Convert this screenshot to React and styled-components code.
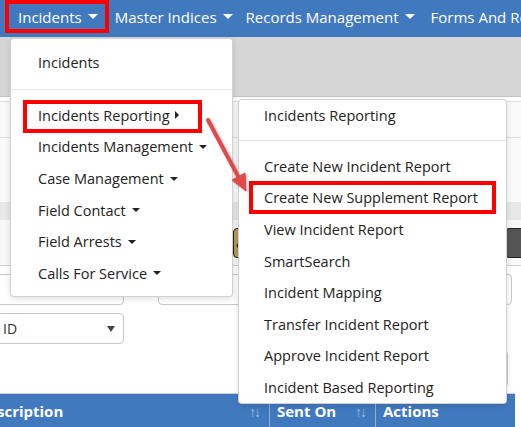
import React from 'react';
import styled, { createGlobalStyle } from 'styled-components';

const GlobalStyle = createGlobalStyle`
  html, body {
    margin: 0;
    padding: 0;
    background: #fff;
  }
  body {
    font-family: 'Open Sans', 'Noto Sans', sans-serif;
  }
`;

const Page = styled.div`
  position: relative;
  width: 521px;
  height: 427px;
  overflow: hidden;
  background: #fff;
`;

const NavBar = styled.div`
  display: flex;
  height: 37px;
  padding-left: 5px;
  background: #4179bf;
  color: #fff;
  font-size: 15px;
  white-space: nowrap;
`;

const NavItem = styled.div`
  display: flex;
  align-items: center;
  box-sizing: border-box;
  height: 33px;
  padding: ${p => p.$pad || '0 9px'};
  border: ${p => (p.$highlight ? '4px solid #ff0000' : '0')};
`;

const Caret = styled.span`
  display: inline-block;
  width: 0;
  height: 0;
  margin-left: ${p => p.$gap || 6}px;
  border-top: ${p => p.$size || 4}px solid currentColor;
  border-left: ${p => p.$size || 4}px solid transparent;
  border-right: ${p => p.$size || 4}px solid transparent;
`;

const CaretRight = styled.span`
  display: inline-block;
  width: 0;
  height: 0;
  margin-left: 5px;
  border-left: 4px solid currentColor;
  border-top: 4px solid transparent;
  border-bottom: 4px solid transparent;
`;

const GrayStrip = styled.div`
  height: 59px;
  background: #d6d6d6;
  border-bottom: 1px solid #c4c4c4;
`;

const Panel = styled.div`
  margin-top: 4px;
  border-top: 1px solid #dedede;
  background: #fafafa;
`;

const PanelHead = styled.div`
  height: 35px;
  border-bottom: 1px solid #dedede;
`;

const PanelBody = styled.div`
  height: 64px;
`;

const Band = styled.div`
  height: 18px;
  background: #e8e8e8;
`;

const ButtonRow = styled.div`
  display: flex;
  align-items: center;
  justify-content: space-between;
  height: 45px;
  padding-left: 233px;
  background: #f8f8f8;
  border-bottom: 1px solid #cfcfcf;
`;

const Button = styled.div`
  display: flex;
  align-items: center;
  box-sizing: border-box;
  width: ${p => p.$w}px;
  height: 30px;
  padding: 0 12px;
  margin-right: ${p => p.$right || 0}px;
  border-radius: 4px;
  border: 1px solid #222;
  background: ${p => p.$bg};
  color: #222;
  font-size: 14px;
  text-indent: ${p => p.$indent || 0}px;
`;

const FieldRow = styled.div`
  display: flex;
  align-items: flex-start;
  gap: 34px;
  margin-top: ${p => p.$top}px;
`;

const Field = styled.div`
  display: flex;
  align-items: center;
  justify-content: space-between;
  box-sizing: border-box;
  width: ${p => p.$w}px;
  height: ${p => p.$h}px;
  margin-left: ${p => p.$ml || 0}px;
  margin-top: ${p => p.$mt || 0}px;
  padding: 0 8px 0 ${p => p.$pl || 8}px;
  border: 1px solid #c8c8c8;
  border-radius: 4px;
  background: #fff;
  color: #333;
  font-size: 14px;
`;

const SelectCaret = styled.span`
  width: 0;
  height: 0;
  border-top: 6px solid #444;
  border-left: 4px solid transparent;
  border-right: 4px solid transparent;
`;

const TableHead = styled.div`
  position: absolute;
  left: -30px;
  top: 393px;
  display: flex;
  width: 545px;
  height: 34px;
  border-top: 1px solid #d0d0d0;
  background: #4179bf;
  color: #fff;
  font-size: 15px;
  font-weight: 700;
`;

const HeadCell = styled.div`
  display: flex;
  align-items: center;
  justify-content: space-between;
  box-sizing: border-box;
  width: ${p => p.$w}px;
  padding: 0 10px 0 7px;
  border-right: ${p => (p.$last ? '0' : '1px solid #8fb0dc')};
`;

const SortIcon = styled.span`
  color: #a3bde0;
  font-size: 14px;
  font-weight: 400;
  letter-spacing: -2px;
`;

const Menu = styled.div`
  position: absolute;
  left: ${p => p.$x}px;
  top: ${p => p.$y}px;
  box-sizing: border-box;
  width: ${p => p.$w}px;
  height: ${p => p.$h}px;
  padding-top: ${p => p.$pt}px;
  background: #fff;
  border: 1px solid rgba(0, 0, 0, 0.18);
  border-radius: 4px;
  box-shadow: 0 2px 6px rgba(0, 0, 0, 0.12);
  color: #222;
  font-size: 14.5px;
  white-space: nowrap;
`;

const MenuItem = styled.div`
  position: relative;
  display: flex;
  align-items: center;
  box-sizing: border-box;
  height: 31.6px;
  padding-left: ${p => p.$pl}px;
  padding-bottom: 2px;

  ${p =>
    p.$box &&
    `
    &::after {
      content: '';
      position: absolute;
      left: ${p.$box[0]}px;
      top: ${p.$box[1]}px;
      width: ${p.$box[2]}px;
      height: ${p.$box[3]}px;
      box-sizing: border-box;
      border: 4px solid #ff0000;
    }
  `}
`;

const Divider = styled.div`
  margin: ${p => p.$m};
  border-top: 1px solid #e6e6e6;
`;

const Arrow = styled.svg`
  position: absolute;
  left: 0;
  top: 0;
  pointer-events: none;
`;

const mainItems = [
  'Incidents Management',
  'Case Management',
  'Field Contact',
  'Field Arrests',
  'Calls For Service',
];

const subItems = [
  'Create New Incident Report',
  'Create New Supplement Report',
  'View Incident Report',
  'SmartSearch',
  'Incident Mapping',
  'Transfer Incident Report',
  'Approve Incident Report',
  'Incident Based Reporting',
];

export default function App() {
  return (
    <Page>
      <GlobalStyle />
      <NavBar>
        <NavItem $highlight $pad="0 7px 0 9px">
          Incidents<Caret $size={5} />
        </NavItem>
        <NavItem $pad="0 7px 0 6px">
          Master Indices<Caret $size={5} />
        </NavItem>
        <NavItem $pad="0 8px 0 6px">
          Records Management<Caret $size={5} />
        </NavItem>
        <NavItem $pad="0 8px">Forms And Reports</NavItem>
      </NavBar>
      <GrayStrip />
      <Panel>
        <PanelHead />
        <PanelBody />
        <Band />
        <ButtonRow>
          <Button $bg="#b99b5b" $indent={-10}>
            ar
          </Button>
          <Button $bg="#555" $w={40} $right={-24} />
        </ButtonRow>
      </Panel>
      <FieldRow $top={8}>
        <Field $w={134} $h={31} $ml={-10} />
        <Field $w={120} $h={31} />
        <Field $w={120} $h={31} $ml={80} />
      </FieldRow>
      <FieldRow $top={8}>
        <Field $w={134} $h={31} $ml={-10} $pl={12}>
          ID
          <SelectCaret />
        </Field>
        <Field $w={120} $h={37} $mt={37} $ml={230} />
      </FieldRow>
      <TableHead>
        <HeadCell $w={300}>
          Description<SortIcon>↑↓</SortIcon>
        </HeadCell>
        <HeadCell $w={106}>
          Sent On<SortIcon>↑↓</SortIcon>
        </HeadCell>
        <HeadCell $w={139} $last>
          Actions
        </HeadCell>
      </TableHead>

      <Menu $x={10} $y={38} $w={223} $h={259} $pt={9}>
        <MenuItem $pl={27}>Incidents</MenuItem>
        <Divider $m="9px 0 11px" />
        <MenuItem $pl={27} $box={[12, -1, 179, 33]}>
          Incidents Reporting<CaretRight />
        </MenuItem>
        {mainItems.map(t => (
          <MenuItem key={t} $pl={27}>
            {t}
            <Caret />
          </MenuItem>
        ))}
      </Menu>

      <Menu $x={238} $y={99} $w={269} $h={305} $pt={1}>
        <MenuItem $pl={25}>Incidents Reporting</MenuItem>
        <Divider $m="7px 0 11px" />
        {subItems.map(t => (
          <MenuItem
            key={t}
            $pl={25}
            $box={t === 'Create New Supplement Report' ? [10, -2, 247, 33] : null}
          >
            {t}
          </MenuItem>
        ))}
      </Menu>

      <Arrow width="521" height="427" viewBox="0 0 521 427">
        <defs>
          <filter id="sh" x="-50%" y="-50%" width="200%" height="200%">
            <feDropShadow dx="1" dy="1" stdDeviation="1" floodOpacity="0.3" />
          </filter>
        </defs>
        <g filter="url(#sh)" fill="#e2494a" stroke="#e2494a">
          <line x1="208" y1="120" x2="239" y2="178" strokeWidth="4" strokeLinecap="round" />
          <polygon points="246,191 232,180 245,173" strokeWidth="1" strokeLinejoin="round" />
        </g>
      </Arrow>
    </Page>
  );
}
